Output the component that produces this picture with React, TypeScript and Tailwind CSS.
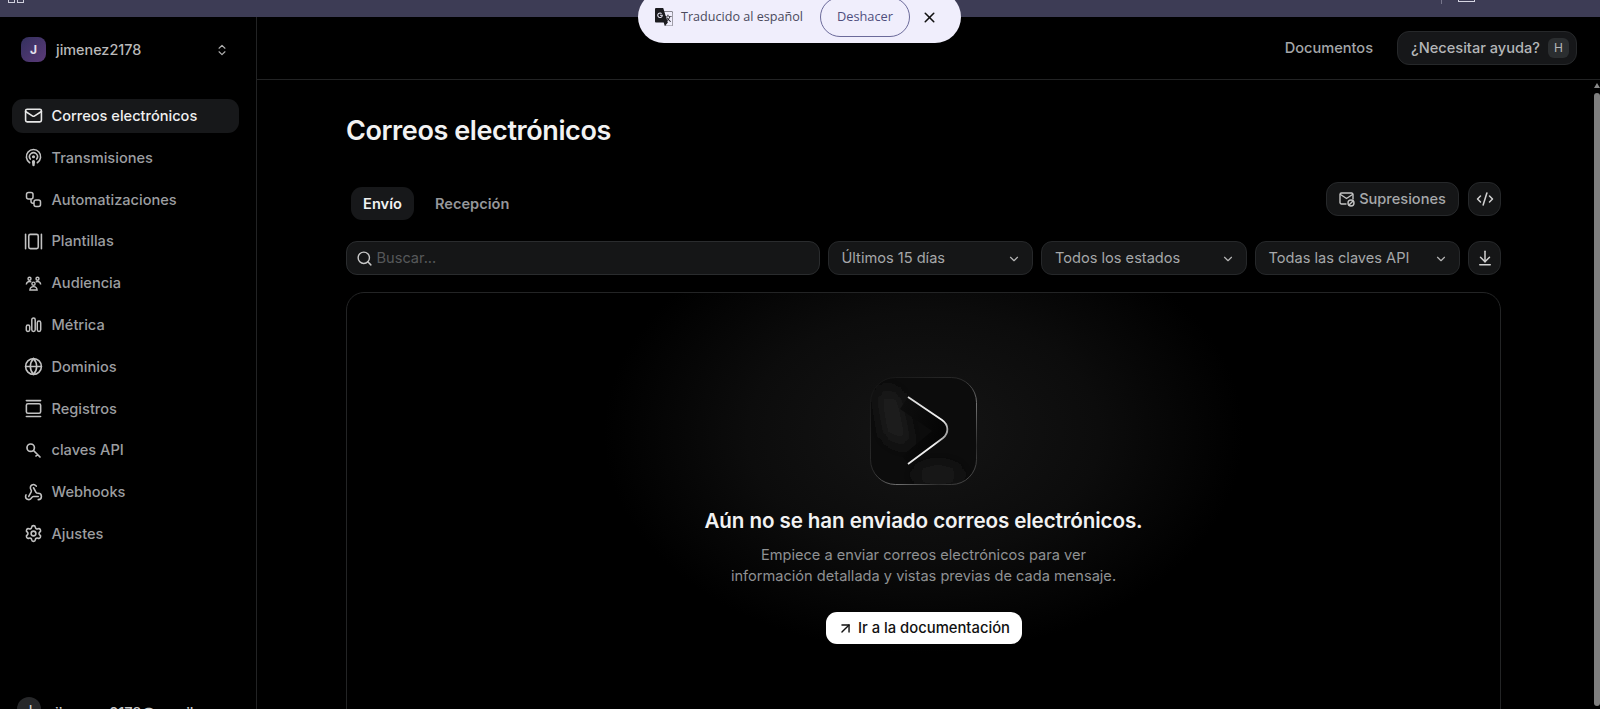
import {
  ArrowDownToLine,
  ArrowUpRight,
  ChevronDown,
  ChevronsUpDown,
  CodeXml,
  GalleryHorizontal,
  GalleryVertical,
  Globe,
  Mail,
  Podcast,
  Search,
  Settings,
  Webhook,
  X,
} from 'lucide-react';
import { SiGoogletranslate } from 'react-icons/si';
import type { ComponentType } from 'react';

type IconProps = { className?: string; strokeWidth?: number };

const FlowIcon = ({ className }: IconProps) => (
  <svg viewBox="-1.5 -1.5 19 19" fill="none" stroke="currentColor" strokeWidth="1.5" className={className}>
    <rect x="1" y="1" width="6.5" height="6.5" rx="2" />
    <rect x="8.5" y="8.5" width="6.5" height="6.5" rx="2" />
    <path d="M5.5 7.5v2.2a2 2 0 0 0 2 2h1" />
  </svg>
);

const AudienceIcon = ({ className }: IconProps) => (
  <svg viewBox="-1.5 -1.5 19 19" fill="none" stroke="currentColor" strokeWidth="1.4" className={className}>
    <circle cx="4" cy="3.2" r="1.5" />
    <circle cx="12" cy="3.2" r="1.5" />
    <circle cx="8" cy="8.2" r="1.6" />
    <path d="M.8 9c.3-2 1.5-3 3.2-3 .7 0 1.3.2 1.8.5M15.2 9c-.3-2-1.5-3-3.2-3-.7 0-1.3.2-1.8.5M4.4 14.5c.2-2.2 1.6-3.4 3.6-3.4s3.4 1.2 3.6 3.4z" />
  </svg>
);

const BarsIcon = ({ className }: IconProps) => (
  <svg viewBox="-1.5 -1.5 19 19" fill="none" stroke="currentColor" strokeWidth="1.5" className={className}>
    <rect x=".8" y="8.5" width="3.4" height="6.5" rx="1.7" />
    <rect x="6.3" y="1.5" width="3.4" height="13.5" rx="1.7" />
    <rect x="11.8" y="4.5" width="3.4" height="10.5" rx="1.7" />
  </svg>
);

const KeyIcon = ({ className }: IconProps) => (
  <svg viewBox="-1.5 -1.5 19 19" fill="none" stroke="currentColor" strokeWidth="1.7" strokeLinecap="round" className={className}>
    <circle cx="5.2" cy="5.2" r="3.7" />
    <path d="M8 8l6.5 6.5M12 12l-1.5 1.5" />
  </svg>
);

const MailBlockIcon = ({ className }: IconProps) => (
  <svg viewBox="0 0 16 16" fill="none" stroke="currentColor" strokeWidth="1.4" strokeLinecap="round" className={className}>
    <path d="M7 13H2.5A1.5 1.5 0 0 1 1 11.5v-8A1.5 1.5 0 0 1 2.5 2h10A1.5 1.5 0 0 1 14 3.5V8" />
    <path d="M1.5 3.5l6 4 6-4" />
    <circle cx="12" cy="12" r="3" />
    <path d="M10 14l4-4" />
  </svg>
);

const navItems: { label: string; icon: ComponentType<IconProps>; active?: boolean }[] = [
  { label: 'Correos electrónicos', icon: Mail, active: true },
  { label: 'Transmisiones', icon: Podcast },
  { label: 'Automatizaciones', icon: FlowIcon },
  { label: 'Plantillas', icon: GalleryHorizontal },
  { label: 'Audiencia', icon: AudienceIcon },
  { label: 'Métrica', icon: BarsIcon },
  { label: 'Dominios', icon: Globe },
  { label: 'Registros', icon: GalleryVertical },
  { label: 'claves API', icon: KeyIcon },
  { label: 'Webhooks', icon: Webhook },
  { label: 'Ajustes', icon: Settings },
];

function ResendLogo() {
  return (
    <svg viewBox="0 0 107 108" className="h-[108px] w-[107px]">
      <defs>
        <linearGradient id="edge" x1="0" y1="0" x2="1" y2="1">
          <stop offset="0" stopColor="#141414" />
          <stop offset="0.45" stopColor="#333333" />
          <stop offset="0.62" stopColor="#8a8a8a" />
          <stop offset="0.82" stopColor="#333333" />
          <stop offset="1" stopColor="#6a6a6a" />
        </linearGradient>
        <linearGradient id="chev" x1="0" y1="0" x2="1" y2="0.6">
          <stop offset="0" stopColor="#d8d8d8" />
          <stop offset="0.8" stopColor="#f4f4f4" />
          <stop offset="1" stopColor="#8f8f8f" />
        </linearGradient>
        <linearGradient id="face" x1="0" y1="0" x2="1" y2="0.5">
          <stop offset="0" stopColor="#0e0e0e" />
          <stop offset="1" stopColor="#040404" />
        </linearGradient>
        <filter id="smoke" x="-60%" y="-60%" width="220%" height="220%">
          <feGaussianBlur stdDeviation="8" />
        </filter>
        <clipPath id="tileClip">
          <rect x="0.5" y="0.5" width="106" height="107" rx="25" />
        </clipPath>
      </defs>
      <rect x="0.5" y="0.5" width="106" height="107" rx="25" fill="#0c0c0c" />
      <g clipPath="url(#tileClip)">
        <path d="M8 12l20 4 12 56-24-12z" fill="#232323" filter="url(#smoke)" />
        <ellipse cx="68" cy="98" rx="24" ry="10" fill="#1d1d1d" filter="url(#smoke)" />
      </g>
      <rect x="0.5" y="0.5" width="106" height="107" rx="25" fill="none" stroke="url(#edge)" strokeWidth="0.8" />
      <path d="M30 32l8-12 34 23c7 5 7 13 1 18L38 87l-6-8 30-25z" fill="url(#face)" />
      <path d="M38 20l34 23c7 5 7 13 1 18L38 87" fill="none" stroke="url(#chev)" strokeWidth="1.8" strokeLinejoin="round" />
    </svg>
  );
}

function SelectBox({ label, className }: { label: string; className: string }) {
  return (
    <button className={`flex h-[34px] items-center justify-between rounded-[11px] border border-[#26282a] bg-[#151617] pl-[13px] pr-[11px] pt-px text-[14.6px] text-[#a6a8aa] ${className}`}>
      {label}
      <ChevronDown className="h-[14px] w-[14px] text-[#b5b5b5]" strokeWidth={2} />
    </button>
  );
}

export default function App() {
  return (
    <div className="relative flex h-[709px] w-[1600px] flex-col overflow-hidden bg-black font-['Inter',sans-serif]">
      <div className="flex h-[17px] shrink-0 items-start justify-between bg-[#3d3c55]">
        <div className="flex gap-[2px] pl-[8px]">
          <span className="h-[3px] w-[7px] border-x border-b border-[#cfcfdc]" />
          <span className="h-[3px] w-[7px] border-x border-b border-[#cfcfdc]" />
        </div>
        <div className="flex gap-[16px] pr-[125px]">
          <span className="h-[4px] w-px bg-[#77768c]" />
          <span className="h-[2px] w-[17px] border-x border-b border-[#d6d6e2]" />
        </div>
      </div>

      <div className="flex min-h-0 flex-1">
        <aside className="w-[257px] shrink-0 overflow-hidden border-r border-[#222324] pr-[17px]">
          <div className="flex items-center justify-between pl-[21px] pr-[10px] pt-[20px]">
            <div className="flex items-center gap-[10px]">
              <div className="flex h-[25px] w-[25px] items-center justify-center rounded-[8px] bg-gradient-to-br from-[#33305e] to-[#5b3a78] text-[12px] font-bold text-[#e4e0ee]">
                J
              </div>
              <span className="pt-px text-[14.4px] font-medium text-[#b9b9b9]">jimenez2178</span>
            </div>
            <ChevronsUpDown className="h-[14px] w-[14px] text-[#b0b0b0]" strokeWidth={2} />
          </div>

          <nav className="mt-[37px] flex flex-col gap-[8px] pl-[12px]">
            {navItems.map(({ label, icon: Icon, active }) => (
              <a
                key={label}
                className={`flex h-[33.8px] items-center gap-[8.5px] rounded-[11px] pl-[12px] text-[14.6px] font-medium ${
                  active ? 'bg-[#17181a] text-[#f0f0f0]' : 'text-[#9c9ea0]'
                }`}
              >
                <Icon className={`h-[19px] w-[19px] ${active ? 'text-[#e8e8e8]' : 'text-[#c2c2c2]'}`} strokeWidth={2} />
                <span className="pt-[2px]">{label}</span>
              </a>
            ))}
          </nav>

          <div className="mt-[146px] flex items-start gap-[14px] pl-[17px]">
            <div className="flex h-[24px] w-[24px] shrink-0 items-center justify-center rounded-full bg-[#27282a] text-[11px] font-semibold text-[#d0d0d0]">
              J
            </div>
            <span className="pt-[6px] text-[14.6px] font-medium text-[#c8c8c8]">jimenez2178@gmail</span>
          </div>
        </aside>

        <main className="flex min-w-0 flex-1 flex-col overflow-hidden">
          <header className="flex h-[63px] shrink-0 items-center justify-end border-b border-[#222324] pr-[23px]">
            <a className="mr-[24px] pt-[2px] text-[14.6px] font-medium text-[#a4a6a8]">Documentos</a>
            <button className="flex h-[34px] w-[180px] items-center justify-between rounded-[12px] border border-[#26282a] bg-[#161719] pl-[13px] pr-[7px] text-[14.6px] font-medium text-[#b4b6b8]">
              <span className="pt-[2px]">¿Necesitar ayuda?</span>
              <span className="flex h-[20px] w-[21px] items-center justify-center rounded-[6px] bg-[#2b2e30] text-[12px] font-normal text-[#b4b6b8]">
                H
              </span>
            </button>
          </header>

          <section className="pl-[89px] pr-[99px]">
            <h1 className="pt-[33px] text-[27px] font-semibold leading-[36px] tracking-[-0.4px] text-[#f2f2f2]">
              Correos electrónicos
            </h1>

            <div className="mt-[33px] flex items-start justify-between">
              <div className="mt-[5px] flex items-center gap-[21px] pl-[5px]">
                <button className="h-[33px] w-[63px] rounded-[11px] bg-[#17181a] pt-[2px] text-[14.6px] font-semibold text-[#f2f2f2]">
                  Envío
                </button>
                <button className="pt-[2px] text-[14.6px] font-semibold text-[#95979a]">Recepción</button>
              </div>
              <div className="flex gap-[9px]">
                <button className="flex h-[34px] w-[133px] items-center justify-center gap-[4px] rounded-[12px] border border-[#26282a] bg-[#151617] text-[14.6px] font-medium text-[#a6a8aa]">
                  <MailBlockIcon className="h-[16px] w-[16px] text-[#c4c4c4]" />
                  <span className="pt-[2px]">Supresiones</span>
                </button>
                <button className="flex h-[34px] w-[33px] items-center justify-center rounded-[12px] border border-[#26282a] bg-[#151617]">
                  <CodeXml className="h-[18px] w-[18px] text-[#d2d2d2]" strokeWidth={2} />
                </button>
              </div>
            </div>

            <div className="mt-[21px] flex gap-[8px]">
              <div className="flex h-[34px] flex-1 items-center gap-[3.5px] rounded-[11px] border border-[#2a2c2e] bg-[#151617] pl-[9px]">
                <Search className="h-[17px] w-[17px] text-[#c8c8c8]" strokeWidth={2} />
                <span className="pt-px text-[14.6px] text-[#56585a]">Buscar...</span>
              </div>
              <SelectBox label="Últimos 15 días" className="w-[205.5px]" />
              <SelectBox label="Todos los estados" className="w-[205.5px]" />
              <SelectBox label="Todas las claves API" className="w-[205.5px]" />
              <button className="flex h-[34px] w-[33px] shrink-0 items-center justify-center rounded-[12px] border border-[#26282a] bg-[#151617]">
                <ArrowDownToLine className="h-[18px] w-[18px] text-[#d2d2d2]" strokeWidth={2} />
              </button>
            </div>

            <div className="mt-[17px] flex h-[640px] flex-col items-center rounded-[18px] border border-[#232425] bg-[radial-gradient(ellipse_320px_220px_at_50%_140px,#151515_0%,#0c0c0c_55%,#000000_100%)] pt-[84px]">
              <ResendLogo />
              <h2 className="mt-[22px] text-[20.6px] font-semibold leading-[28px] tracking-[-0.1px] text-[#f2f2f2]">
                Aún no se han enviado correos electrónicos.
              </h2>
              <p className="mt-[10px] text-center text-[14.6px] leading-[21px] text-[#8f9193]">
                Empiece a enviar correos electrónicos para ver
                <br />
                información detallada y vistas previas de cada mensaje.
              </p>
              <button className="mt-[25px] flex h-[32px] w-[196px] items-center justify-center gap-[4px] rounded-[11px] bg-white text-[14.8px] font-medium text-[#111111]">
                <ArrowUpRight className="h-[17px] w-[17px]" strokeWidth={2} />
                <span className="pt-px">Ir a la documentación</span>
              </button>
            </div>
          </section>
        </main>
      </div>

      <div className="absolute left-[638px] top-[-9px] flex h-[52px] w-[323px] items-center rounded-full bg-[#f0eefc] pl-[17px] font-['Open_Sans',sans-serif]">
        <SiGoogletranslate className="h-[18px] w-[18px] text-[#1b1b1f]" />
        <span className="ml-[8px] text-[12.6px] text-[#4b4a5c]">Traducido al español</span>
        <button className="ml-[17px] h-[40px] w-[90px] rounded-full border border-[#6b6a9a] text-[12.8px] font-medium text-[#4f4e7e]">
          Deshacer
        </button>
        <X className="ml-[11px] h-[17px] w-[17px] text-[#111111]" strokeWidth={2.2} />
      </div>

      <div className="absolute right-0 top-[83px] flex w-[7px] flex-col items-center gap-[5px]">
        <span className="h-0 w-0 border-x-[3px] border-b-[5px] border-x-transparent border-b-[#8a8a8a]" />
        <span className="h-[613px] w-[6px] rounded-full bg-[#7f7f7f]" />
      </div>
    </div>
  );
}
